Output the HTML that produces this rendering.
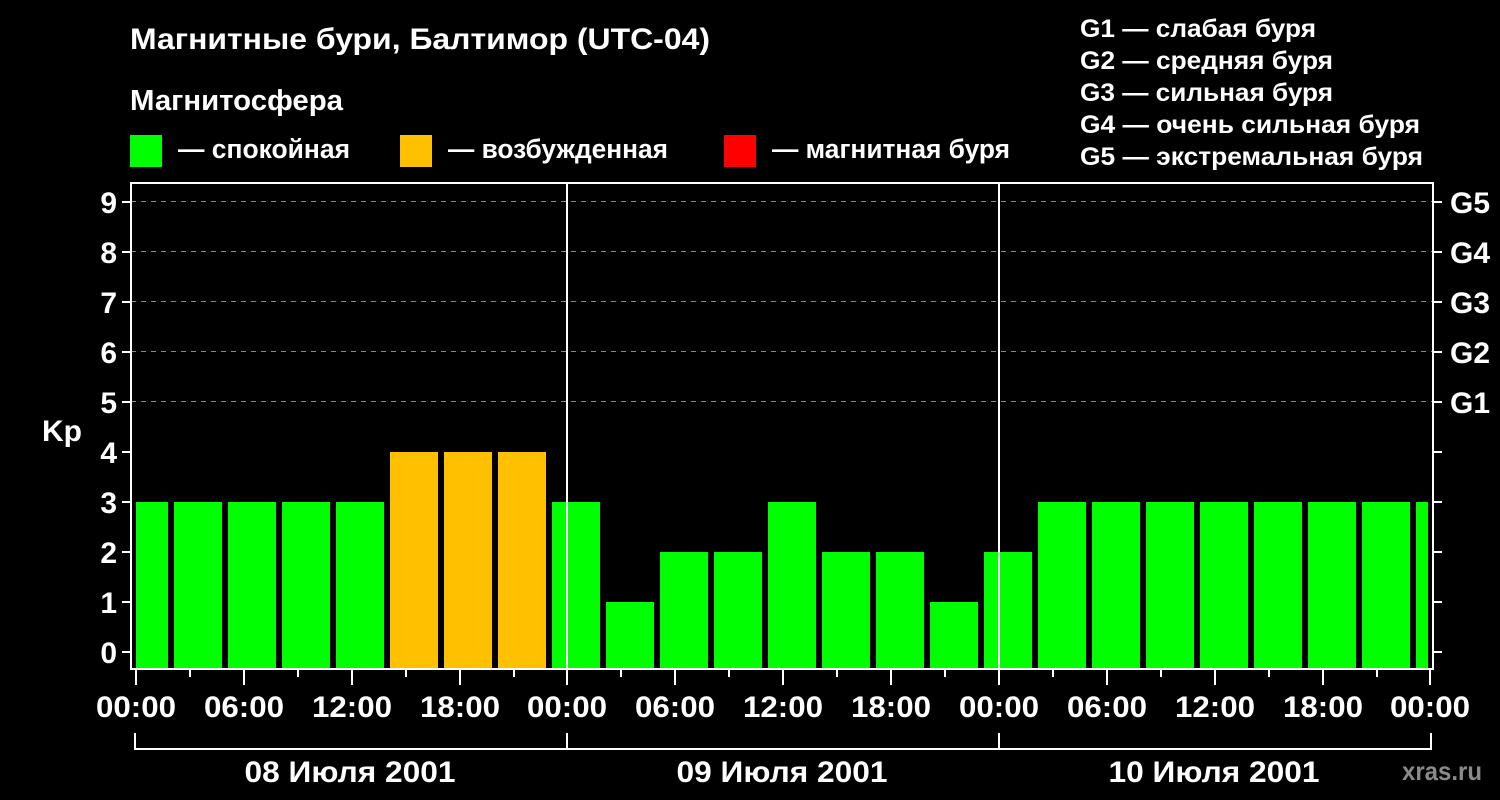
<!DOCTYPE html>
<html><head><meta charset="utf-8"><style>
html,body{margin:0;padding:0;background:#000;}
svg{display:block;}
text{font-family:"Liberation Sans",Arial,sans-serif;font-weight:bold;fill:#fff;}
</style></head><body>
<svg width="1500" height="800" viewBox="0 0 1500 800" xmlns="http://www.w3.org/2000/svg">
<rect width="1500" height="800" fill="#000"/>
<text x="130" y="49" font-size="30" textLength="580" lengthAdjust="spacingAndGlyphs">Магнитные бури, Балтимор (UTC-04)</text>
<text x="130" y="110" font-size="29" textLength="213" lengthAdjust="spacingAndGlyphs">Магнитосфера</text>
<rect x="130" y="135" width="32" height="32" fill="#00ff00"/>
<text x="178" y="158" font-size="27" textLength="172" lengthAdjust="spacingAndGlyphs">— спокойная</text>
<rect x="400" y="135" width="32" height="32" fill="#ffc000"/>
<text x="448" y="158" font-size="27" textLength="220" lengthAdjust="spacingAndGlyphs">— возбужденная</text>
<rect x="724" y="135" width="32" height="32" fill="#ff0000"/>
<text x="772" y="158" font-size="27" textLength="238" lengthAdjust="spacingAndGlyphs">— магнитная буря</text>
<g font-size="25">
<text x="1080" y="37" textLength="236" lengthAdjust="spacingAndGlyphs">G1 — слабая буря</text>
<text x="1080" y="69" textLength="253" lengthAdjust="spacingAndGlyphs">G2 — средняя буря</text>
<text x="1080" y="101" textLength="253" lengthAdjust="spacingAndGlyphs">G3 — сильная буря</text>
<text x="1080" y="133" textLength="340" lengthAdjust="spacingAndGlyphs">G4 — очень сильная буря</text>
<text x="1080" y="165" textLength="343" lengthAdjust="spacingAndGlyphs">G5 — экстремальная буря</text>
</g>
<g stroke="#888" stroke-width="1" stroke-dasharray="5,5">
<line x1="131" y1="201.5" x2="1432" y2="201.5"/>
<line x1="131" y1="251.5" x2="1432" y2="251.5"/>
<line x1="131" y1="301.5" x2="1432" y2="301.5"/>
<line x1="131" y1="351.5" x2="1432" y2="351.5"/>
<line x1="131" y1="401.5" x2="1432" y2="401.5"/>
</g>
<g fill="#00ff00">
<rect x="136" y="502" width="32" height="166"/>
<rect x="174" y="502" width="48" height="166"/>
<rect x="228" y="502" width="48" height="166"/>
<rect x="282" y="502" width="48" height="166"/>
<rect x="336" y="502" width="48" height="166"/>
<rect x="552" y="502" width="48" height="166"/>
<rect x="606" y="602" width="48" height="66"/>
<rect x="660" y="552" width="48" height="116"/>
<rect x="714" y="552" width="48" height="116"/>
<rect x="768" y="502" width="48" height="166"/>
<rect x="822" y="552" width="48" height="116"/>
<rect x="876" y="552" width="48" height="116"/>
<rect x="930" y="602" width="48" height="66"/>
<rect x="984" y="552" width="48" height="116"/>
<rect x="1038" y="502" width="48" height="166"/>
<rect x="1092" y="502" width="48" height="166"/>
<rect x="1146" y="502" width="48" height="166"/>
<rect x="1200" y="502" width="48" height="166"/>
<rect x="1254" y="502" width="48" height="166"/>
<rect x="1308" y="502" width="48" height="166"/>
<rect x="1362" y="502" width="48" height="166"/>
<rect x="1416" y="502" width="12" height="166"/>
</g>
<g fill="#ffc000">
<rect x="390" y="452" width="48" height="216"/>
<rect x="444" y="452" width="48" height="216"/>
<rect x="498" y="452" width="48" height="216"/>
</g>
<g stroke="#fff" stroke-width="2" fill="none">
<polyline points="131,183 1433,183"/>
<line x1="131" y1="182" x2="131" y2="670"/>
<line x1="1433" y1="182" x2="1433" y2="670"/>
<line x1="130" y1="669" x2="1434" y2="669"/>
<line x1="567" y1="183" x2="567" y2="669"/>
<line x1="999" y1="183" x2="999" y2="669"/>
<path d="M122 202H131M122 252H131M122 302H131M122 352H131M122 402H131M122 452H131M122 502H131M122 552H131M122 602H131M122 652H131"/>
<path d="M1433 202H1442M1433 252H1442M1433 302H1442M1433 352H1442M1433 402H1442M1433 452H1442M1433 502H1442M1433 552H1442M1433 602H1442M1433 652H1442"/>
<path d="M136 669V685M244 669V685M352 669V685M460 669V685M567 669V685M675 669V685M783 669V685M891 669V685M999 669V685M1107 669V685M1215 669V685M1323 669V685M1430 669V685"/>
<path d="M190 669V677M298 669V677M406 669V677M514 669V677M621 669V677M729 669V677M837 669V677M945 669V677M1053 669V677M1161 669V677M1269 669V677M1377 669V677"/>
<path d="M135 733V749H1431V733M567 733V749M999 733V749"/>
</g>
<g font-size="30" text-anchor="end">
<text x="117" y="213">9</text><text x="117" y="263">8</text><text x="117" y="313">7</text>
<text x="117" y="363">6</text><text x="117" y="413">5</text><text x="117" y="463">4</text>
<text x="117" y="513">3</text><text x="117" y="563">2</text><text x="117" y="613">1</text>
<text x="117" y="663">0</text>
</g>
<text x="42" y="441" font-size="30">Kp</text>
<g font-size="30">
<text x="1450" y="213" textLength="40" lengthAdjust="spacingAndGlyphs">G5</text><text x="1450" y="263" textLength="40" lengthAdjust="spacingAndGlyphs">G4</text><text x="1450" y="313" textLength="40" lengthAdjust="spacingAndGlyphs">G3</text>
<text x="1450" y="363" textLength="40" lengthAdjust="spacingAndGlyphs">G2</text><text x="1450" y="413" textLength="40" lengthAdjust="spacingAndGlyphs">G1</text>
</g>
<g font-size="30" text-anchor="middle" textLength="80" lengthAdjust="spacingAndGlyphs">
<text x="136" y="717" textLength="80" lengthAdjust="spacingAndGlyphs">00:00</text><text x="244" y="717" textLength="80" lengthAdjust="spacingAndGlyphs">06:00</text><text x="352" y="717" textLength="80" lengthAdjust="spacingAndGlyphs">12:00</text><text x="460" y="717" textLength="80" lengthAdjust="spacingAndGlyphs">18:00</text>
<text x="567" y="717" textLength="80" lengthAdjust="spacingAndGlyphs">00:00</text><text x="675" y="717" textLength="80" lengthAdjust="spacingAndGlyphs">06:00</text><text x="783" y="717" textLength="80" lengthAdjust="spacingAndGlyphs">12:00</text><text x="891" y="717" textLength="80" lengthAdjust="spacingAndGlyphs">18:00</text>
<text x="999" y="717" textLength="80" lengthAdjust="spacingAndGlyphs">00:00</text><text x="1107" y="717" textLength="80" lengthAdjust="spacingAndGlyphs">06:00</text><text x="1215" y="717" textLength="80" lengthAdjust="spacingAndGlyphs">12:00</text><text x="1323" y="717" textLength="80" lengthAdjust="spacingAndGlyphs">18:00</text>
<text x="1430" y="717" textLength="80" lengthAdjust="spacingAndGlyphs">00:00</text>
<text x="350" y="782" textLength="211" lengthAdjust="spacingAndGlyphs">08 Июля 2001</text>
<text x="782" y="782" textLength="211" lengthAdjust="spacingAndGlyphs">09 Июля 2001</text>
<text x="1214" y="782" textLength="211" lengthAdjust="spacingAndGlyphs">10 Июля 2001</text>
</g>
<text x="1402" y="780" font-size="26" style="fill:#8a8a8a" textLength="80" lengthAdjust="spacingAndGlyphs">xras.ru</text>
</svg>
</body></html>
